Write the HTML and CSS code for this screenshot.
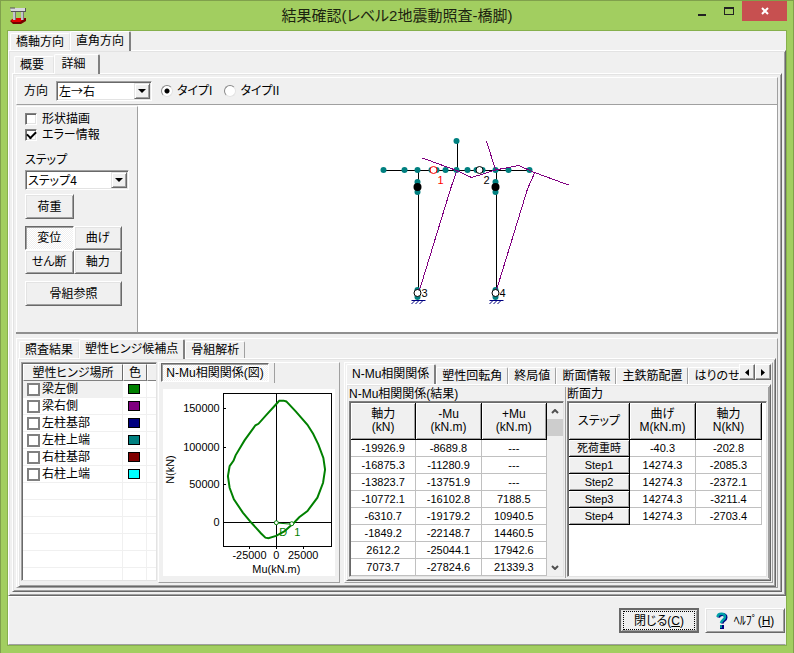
FILE: index.html
```html
<!DOCTYPE html>
<html lang="ja">
<head>
<meta charset="utf-8">
<title>結果確認(レベル2地震動照査-橋脚)</title>
<link rel="stylesheet" href="styles.css">
</head>
<body>
<div class="window">
  <header class="titlebar">
    <svg class="app-icon" width="17" height="17" viewBox="0 0 17 17" aria-hidden="true">
      <path d="M0 14l4-3h12v3l-5 3H3z" fill="#700"/>
      <path d="M1 13l4-2h10l-5 4H2z" fill="#e00000"/>
      <path d="M3 4h3v9H3zM11 4h3v9h-3z" fill="#c4c4cc"/>
      <path d="M5 4h1v9H5zM13 4h1v9h-1z" fill="#777"/>
      <path d="M0 1h15l1 3H1z" fill="#d8d8de"/>
      <path d="M0 1h5M1 4.500h15M15.500 1v4" stroke="#555" fill="none"/>
    </svg>
    <h1 class="title">結果確認(レベル2地震動照査-橋脚)</h1>
    <div class="controls">
      <button class="control" type="button" aria-label="最小化"><svg width="8" height="9"><path d="M0 7h8v2H0z" fill="#222"/></svg></button>
      <button class="control" type="button" aria-label="最大化"><svg width="10" height="9"><path d="M0 0h10v8H0zM1 2v5h8V2z" fill="#222" fill-rule="evenodd"/></svg></button>
      <button class="control close" type="button" aria-label="閉じる"><svg width="8" height="8"><path d="M1 1l6 6M7 1l-6 6" stroke="#fff" stroke-width="2"/></svg></button>
    </div>
  </header>

  <main class="client">
    <nav class="tabs">
      <button class="tab" type="button">橋軸方向</button>
      <button class="tab active" type="button">直角方向</button>
    </nav>
    <section class="page">
      <nav class="tabs">
        <button class="tab short" type="button">概要</button>
        <button class="tab active short" type="button">詳細</button>
      </nav>
      <section class="page">
        <form class="direction raised">
          <label for="dir">方向</label>
          <span class="combo combo-dir"><select id="dir"><option>左→右</option></select><i class="drop"></i></span>
          <label class="radio"><input type="radio" name="type" checked>タイプI</label>
          <label class="radio"><input type="radio" name="type">タイプII</label>
        </form>

        <div class="view">
          <aside class="side">
            <label class="check"><input type="checkbox">形状描画</label>
            <label class="check"><input type="checkbox" checked>エラー情報</label>
            <label class="step-label" for="step">ステップ</label>
            <span class="combo combo-step"><select id="step"><option>ステップ4</option></select><i class="drop"></i></span>
            <button class="btn load" type="button">荷重</button>
            <div class="modes">
              <button class="btn pressed" type="button">変位</button>
              <button class="btn" type="button">曲げ</button>
              <button class="btn" type="button">せん断</button>
              <button class="btn" type="button">軸力</button>
            </div>
            <button class="btn" type="button">骨組参照</button>
          </aside>
          <div class="canvas">
            <svg class="frame" viewBox="139 105 638 227" role="img" aria-label="骨組モデル">
              <g stroke="#000" shape-rendering="crispEdges">
                <path d="M384 170.500H530M457.500 141V170M418.500 170V298M496.500 170V298" fill="none"/>
              </g>
              <g fill="#008080">
                <circle cx="384" cy="170" r="3"/><circle cx="405" cy="170" r="3"/><circle cx="418" cy="170" r="3"/>
                <circle cx="432" cy="170" r="3"/><circle cx="437" cy="170" r="3"/><circle cx="446" cy="170" r="3"/>
                <circle cx="457" cy="170" r="3"/><circle cx="468" cy="170" r="3"/><circle cx="477" cy="170" r="3"/>
                <circle cx="483" cy="170" r="3"/><circle cx="496" cy="170" r="3"/><circle cx="509" cy="170" r="3"/>
                <circle cx="530" cy="170" r="3"/><circle cx="457" cy="141" r="3"/>
                <circle cx="418" cy="182" r="3"/><circle cx="418" cy="192" r="3"/><circle cx="496" cy="182" r="3"/><circle cx="496" cy="192" r="3"/>
                <circle cx="418" cy="290" r="3"/><circle cx="418" cy="297" r="3"/><circle cx="496" cy="290" r="3"/><circle cx="496" cy="297" r="3"/>
              </g>
              <circle cx="418" cy="187" r="4"/><circle cx="496" cy="187" r="4"/>
              <g stroke="#800080" fill="none" shape-rendering="crispEdges">
                <path d="M423 158L457 170.500L472 177.500L485 173.500L496 170L519 165.500L535 172.500L569 185"/>
                <path d="M457 172L452 186L420 290M487 141L496 170M535 173L528 189L497 290"/>
              </g>
              <g fill="#fff" stroke="#000">
                <circle cx="434" cy="170" r="3.500" stroke="#f00"/><circle cx="480" cy="170" r="3.500"/>
                <circle cx="418" cy="293" r="3.500"/><circle cx="496" cy="293" r="3.500"/>
              </g>
              <g stroke="#000080" fill="none">
                <path d="M412 300.500H426M415 301l-3 3M419 301l-3 3M423 301l-3 3M490 300.500H504M493 301l-3 3M497 301l-3 3M501 301l-3 3"/>
              </g>
              <g class="axis">
                <text x="438" y="184" fill="#f00">1</text><text x="484" y="184">2</text>
                <text x="422" y="297">3</text><text x="500" y="297">4</text>
              </g>
            </svg>
          </div>
        </div>

        <div class="results raised">
          <nav class="tabs">
            <button class="tab" type="button">照査結果</button>
            <button class="tab active" type="button">塑性ヒンジ候補点</button>
            <button class="tab" type="button">骨組解析</button>
          </nav>
          <section class="page columns">
            <div class="hinge-list">
              <table class="hinges">
                <colgroup><col><col class="c-color"><col class="c-rest"></colgroup>
                <thead><tr><th>塑性ヒンジ場所</th><th>色</th><th></th></tr></thead>
                <tbody>
                  <tr class="current"><td><label><input type="checkbox">梁左側</label></td><td><i class="swatch green"></i></td><td></td></tr>
                  <tr><td><label><input type="checkbox">梁右側</label></td><td><i class="swatch purple"></i></td><td></td></tr>
                  <tr><td><label><input type="checkbox">左柱基部</label></td><td><i class="swatch navy"></i></td><td></td></tr>
                  <tr><td><label><input type="checkbox">左柱上端</label></td><td><i class="swatch teal"></i></td><td></td></tr>
                  <tr><td><label><input type="checkbox">右柱基部</label></td><td><i class="swatch maroon"></i></td><td></td></tr>
                  <tr><td><label><input type="checkbox">右柱上端</label></td><td><i class="swatch aqua"></i></td><td></td></tr>
                  <tr><td></td><td></td><td></td></tr>
                  <tr><td></td><td></td><td></td></tr>
                  <tr><td></td><td></td><td></td></tr>
                  <tr><td></td><td></td><td></td></tr>
                  <tr><td></td><td></td><td></td></tr>
                  <tr><td></td><td></td><td></td></tr>
                </tbody>
              </table>
            </div>

            <div class="chart-panel">
              <div class="chart-head"><button class="chart-btn" type="button">N-Mu相関関係(図)</button></div>
              <div class="chart-box">
                <svg class="chart" viewBox="0 0 173 188" role="img" aria-label="N-Mu相関関係">
                  <g stroke="#000" fill="none" shape-rendering="crispEdges">
                    <path d="M60.500 4.500h109v154h-109zM114.500 4V158M60 134.500H169M60 19.500h3M60 58.500h3M60 96.500h3M87.500 158v3M114.500 158v3M141.500 158v3"/>
                  </g>
                  <path d="M117 11.700L114.700 14.300L104 26L96 35L93 36.500L82 51.700L73 66.700L71 72L67 77.700L65.300 87.700L67 99.300L71.300 111L80.300 124.300L88.700 134.300L98.700 145.300L103 149.500L106 150L113.700 147.700L122 143.300L132 134.300L137 129L145.300 122.700L155.300 109.300L161 94.300L163 81L161.300 69.300L156.300 56L151 45L145.300 36L133.700 22.700L124 12.500L121.300 11.700Z" fill="none" stroke="#008000" stroke-width="2"/>
                  <path d="M114 134.700L129 136" stroke="#008000"/>
                  <g fill="#fff" stroke="#008000"><circle cx="114" cy="134.500" r="2"/><circle cx="129.500" cy="135.500" r="2"/></g>
                  <g class="axis end"><text x="57" y="23">150000</text><text x="57" y="62">100000</text><text x="57" y="100">50000</text><text x="57" y="138">0</text></g>
                  <g class="axis mid"><text x="87" y="171">-25000</text><text x="114" y="171">0</text><text x="141" y="171">25000</text></g>
                  <g class="axis-title"><text x="114" y="185">Mu(kN.m)</text><text transform="translate(11 81) rotate(-90)">N(kN)</text></g>
                  <g class="axis mark"><text x="117" y="148">D</text><text x="132" y="148">1</text></g>
                </svg>
              </div>
            </div>

            <div class="detail raised">
              <div class="tab-strip">
                <nav class="tabs">
                  <button class="tab active" type="button">N-Mu相関関係</button>
                  <button class="tab" type="button">塑性回転角</button>
                  <button class="tab" type="button">終局値</button>
                  <button class="tab" type="button">断面情報</button>
                  <button class="tab" type="button">主鉄筋配置</button>
                  <button class="tab last" type="button">はりのせ</button>
                </nav>
                <button class="scroll-btn" type="button" aria-label="前へ"><svg width="4" height="7"><path d="M4 0v7L0 3.500z"/></svg></button>
                <button class="scroll-btn" type="button" aria-label="次へ"><svg width="4" height="7"><path d="M0 0v7l4-3.500z"/></svg></button>
              </div>
              <section class="page grids">
                <div class="group">
                  <h2>N-Mu相関関係(結果)</h2>
                  <div class="sunken">
                    <table class="grid">
                      <thead><tr><th>軸力<br>(kN)</th><th>-Mu<br>(kN.m)</th><th>+Mu<br>(kN.m)</th></tr></thead>
                      <tbody>
                        <tr><td>-19926.9</td><td>-8689.8</td><td>---</td></tr>
                        <tr><td>-16875.3</td><td>-11280.9</td><td>---</td></tr>
                        <tr><td>-13823.7</td><td>-13751.9</td><td>---</td></tr>
                        <tr><td>-10772.1</td><td>-16102.8</td><td>7188.5</td></tr>
                        <tr><td>-6310.7</td><td>-19179.2</td><td>10940.5</td></tr>
                        <tr><td>-1849.2</td><td>-22148.7</td><td>14460.5</td></tr>
                        <tr><td>2612.2</td><td>-25044.1</td><td>17942.6</td></tr>
                        <tr><td>7073.7</td><td>-27824.6</td><td>21339.3</td></tr>
                      </tbody>
                    </table>
                    <div class="scrollbar">
                      <svg width="8" height="5"><path d="M1 4l3-3 3 3" fill="none" stroke="#505050" stroke-width="2"/></svg>
                      <i class="thumb"></i>
                      <svg width="8" height="5"><path d="M1 1l3 3 3-3" fill="none" stroke="#505050" stroke-width="2"/></svg>
                    </div>
                  </div>
                </div>
                <div class="group">
                  <h2>断面力</h2>
                  <div class="sunken">
                    <table class="grid forces">
                      <colgroup><col class="c-step"><col><col></colgroup>
                      <thead><tr><th>ステップ</th><th>曲げ<br>M(kN.m)</th><th>軸力<br>N(kN)</th></tr></thead>
                      <tbody>
                        <tr><th>死荷重時</th><td>-40.3</td><td>-202.8</td></tr>
                        <tr><th>Step1</th><td>14274.3</td><td>-2085.3</td></tr>
                        <tr><th>Step2</th><td>14274.3</td><td>-2372.1</td></tr>
                        <tr><th>Step3</th><td>14274.3</td><td>-3211.4</td></tr>
                        <tr><th>Step4</th><td>14274.3</td><td>-2703.4</td></tr>
                      </tbody>
                    </table>
                  </div>
                </div>
              </section>
            </div>
          </section>
        </div>
      </section>
    </section>

    <footer class="footer">
      <button class="btn default" type="button"><span class="focus">閉じる(<u>C</u>)</span></button>
      <button class="btn help" type="button">
        <svg width="12" height="17" viewBox="0 0 12 17" aria-hidden="true">
          <path d="M2.500 5.500C3 1.500 10 1.500 10 5.500C10 8.500 6.500 8 6 11.500" fill="none" stroke="#000080" stroke-width="3"/>
          <path d="M1.500 5C2 .5 9 .5 9 5C9 8 5.500 7.500 5 11" fill="none" stroke="#00a0a8" stroke-width="2.500"/>
          <path d="M4 13h4v4H4z" fill="#000080"/><path d="M4 13h2v3H4z" fill="#008c98"/>
        </svg>
        <span>ﾍﾙﾌﾟ(<u>H</u>)</span>
      </button>
    </footer>
  </main>
</div>
</body>
</html>
```
FILE: styles.css
```css
* { box-sizing: border-box; }

body {
  margin: 0;
  font: 12px/14px "Liberation Sans", "Noto Sans CJK JP", sans-serif;
  font-feature-settings: "palt";
  color: #000;
}

button, select, input {
  margin: 0;
  padding: 0;
  font: inherit;
  font-feature-settings: inherit;
  color: inherit;
}

button { white-space: nowrap; }
svg { display: block; }

/* Window frame */
.window {
  display: flex;
  flex-direction: column;
  min-height: 100vh;
  padding: 0 6px 7px;
  background: #a2ce60;
  border: 1px solid #80a04c;
}

.titlebar {
  display: grid;
  grid-template-columns: 1fr auto 1fr;
  height: 29px;
}

.app-icon { margin: 6px 0 0 3px; }

.title {
  margin: 0;
  padding-top: 3px;
  font-size: 15px;
  font-weight: 400;
  line-height: 24px;
  color: #1c2410;
}

.controls {
  display: flex;
  justify-content: flex-end;
}

.control {
  display: flex;
  justify-content: center;
  width: 27px;
  height: 20px;
  padding-top: 6px;
  background: none;
  border: 0;
}

.control.close {
  width: 45px;
  background: #c75050;
}

.client {
  flex: 1;
  display: flex;
  flex-direction: column;
  background: #f0f0f0;
  border: 1px solid #86b04c;
}

/* Tabs and their pages */
.tabs {
  display: flex;
  align-items: flex-end;
  min-width: 0;
  height: 19px;
  padding-left: 2px;
}

.tab {
  flex: none;
  height: 17px;
  padding: 0 5px;
  background: #f0f0f0;
  border: solid;
  border-width: 1px 1px 0;
  border-color: #fff #a0a0a0 #fff #fff;
  border-radius: 2px 2px 0 0;
}

.tab:has(+ .active) { border-right-color: #e3e3e3; }

.tab.active {
  position: relative;
  z-index: 1;
  height: 20px;
  margin-bottom: -1px;
  padding: 0 5px 2px;
  border-right: 2px solid #808080;
}

.tab.short { min-width: 40px; padding: 0 9px 0 5px; }
.tab.active.short { min-width: 46px; padding: 0 12px 2px 6px; }

.page {
  flex: 1;
  display: flex;
  flex-direction: column;
  min-width: 0;
  padding: 3px;
  border: 1px solid;
  border-color: #fff #696969 #696969 #fff;
  box-shadow: inset 1px 1px #e3e3e3, inset -1px -1px #a0a0a0;
}

.raised {
  border: 1px solid;
  border-color: #fff #a0a0a0 #a0a0a0 #fff;
}

/* Direction bar */
.direction {
  display: flex;
  align-items: center;
  height: 28px;
  padding-left: 7px;
}

.combo {
  position: relative;
  display: block;
  height: 20px;
}

.combo-dir {
  width: 96px;
  margin: 0 9px 0 8px;
}

.combo select {
  width: 100%;
  height: 100%;
  padding: 0 18px 0 2px;
  appearance: none;
  font-family: "Noto Sans CJK JP", sans-serif;
  background: #fff;
  border: 1px solid;
  border-color: #a0a0a0 #fff #fff #a0a0a0;
  border-radius: 0;
  box-shadow: inset 1px 1px #696969, inset -1px -1px #e3e3e3;
}

.drop {
  position: absolute;
  top: 2px;
  right: 2px;
  bottom: 2px;
  display: grid;
  place-items: center;
  width: 16px;
  background: #f0f0f0;
  border: 1px solid;
  border-color: #e3e3e3 #696969 #696969 #e3e3e3;
  box-shadow: inset 1px 1px #fff, inset -1px -1px #a0a0a0;
  pointer-events: none;
}

.drop::after {
  content: "";
  border: solid transparent;
  border-width: 4px 4px 0;
  border-top-color: #000;
}

.radio {
  display: flex;
  align-items: center;
  gap: 4px;
  margin-right: 12px;
}

.radio input {
  width: 12px;
  height: 12px;
  appearance: none;
  background: #fff;
  border: 1px solid;
  border-color: #888 #e3e3e3 #e3e3e3 #888;
  border-radius: 50%;
}

.radio input:checked { background: radial-gradient(circle, #000 0 2px, #fff 3px); }

/* Model view */
.view {
  display: flex;
  height: 229px;
  border-bottom: 2px solid #909090;
}

.side {
  display: flex;
  flex-direction: column;
  flex: none;
  width: 122px;
  margin-top: 1px;
  padding: 4px 15px 0 8px;
  border: solid;
  border-width: 1px 1px 0;
  border-color: #fff #a0a0a0 #fff #fff;
}

.check {
  display: flex;
  align-items: center;
  gap: 5px;
  height: 16px;
}

.check input {
  display: grid;
  width: 12px;
  height: 12px;
  appearance: none;
  background: #fff;
  border: 1px solid;
  border-color: #808080 #fff #fff #808080;
  box-shadow: inset 1px 1px #696969, inset -1px -1px #e3e3e3;
}

.check input:checked::after {
  content: "";
  place-self: center;
  width: 7px;
  height: 4px;
  margin-bottom: 2px;
  border: solid #000;
  border-width: 0 0 2px 2px;
  rotate: -45deg;
}

.step-label { margin: 10px 0 3px; }
.combo-step { width: 104px; }

.btn {
  height: 25px;
  background: #f0f0f0;
  border: 1px solid;
  border-color: #fff #696969 #696969 #fff;
  box-shadow: inset 1px 1px #e3e3e3, inset -1px -1px #a0a0a0;
}

.load {
  width: 49px;
  margin-top: 4px;
}

.modes {
  display: grid;
  grid-template-columns: 1fr 1fr;
  margin: 7px 0;
}

.modes .btn { height: 24px; }

.side > .btn,
.modes { flex: none; }

.btn.pressed {
  background: repeating-conic-gradient(#fff 0 25%, #f0f0f0 0 50%) 0 0 / 2px 2px;
  border-color: #696969 #fff #fff #696969;
  box-shadow: inset 1px 1px #a0a0a0;
}

.canvas {
  flex: 1;
  background: #fff;
  border-right: 1px solid #a0a0a0;
}

.frame {
  width: 100%;
  height: 100%;
}

/* Results */
.results {
  flex: 1;
  display: flex;
  flex-direction: column;
  margin-top: 4px;
  padding: 0 1px;
}

.results > .tabs { padding-left: 1px; }

.columns {
  display: grid;
  grid-template-columns: 136px 183px minmax(0, 1fr);
  padding: 3px 2px;
}

.hinge-list {
  height: 219px;
  overflow: hidden;
  background: #fff;
  border: 1px solid;
  border-color: #a0a0a0 #e3e3e3 #e3e3e3 #a0a0a0;
  box-shadow: inset 1px 1px #696969;
  padding: 1px 0 0 1px;
}

.hinges {
  width: 100%;
  table-layout: fixed;
  border-collapse: separate;
  border-spacing: 0;
}

.c-color { width: 24px; }
.c-rest { width: 9px; }

.hinges th {
  height: 17px;
  padding: 0;
  font-weight: 400;
  background: #f0f0f0;
  border: 1px solid;
  border-color: #fff #696969 #808080 #fff;
}

.hinges td {
  height: 17px;
  padding: 0 0 0 4px;
  border: solid #f0f0f0;
  border-width: 0 1px 1px 0;
}

.hinges td:last-child,
.hinges th:last-child { border-right: 0; }

.hinges .current td:first-child { background: #f0f0f0; }

.hinges label {
  display: flex;
  align-items: center;
  gap: 2px;
  height: 16px;
}

.hinges input {
  width: 13px;
  height: 13px;
  appearance: none;
  background: #fff;
  border: 2px solid #808080;
}

.swatch {
  display: block;
  width: 12px;
  height: 10px;
  margin-left: 1px;
  border: 1px solid #000;
}

.green { background: #008000; }
.purple { background: #800080; }
.navy { background: #000080; }
.teal { background: #008080; }
.maroon { background: #800000; }
.aqua { background: #00ffff; }

.chart-panel {
  display: flex;
  flex-direction: column;
  margin-left: 1px;
  border: 1px solid;
  border-color: #fff #a0a0a0 #a0a0a0 #fff;
}

.chart-head {
  width: 116px;
  height: 20px;
  padding-left: 2px;
  border-right: 1px solid #a0a0a0;
}

.chart-btn {
  width: 108px;
  height: 19px;
  background: repeating-conic-gradient(#fff 0 25%, #f0f0f0 0 50%) 0 0 / 2px 2px;
  border: 1px solid;
  border-color: #696969 #fff #fff #696969;
  box-shadow: inset 1px 1px #a0a0a0;
}

.chart-box {
  margin: 6px 4px 0;
  background: #fff;
}

.chart { width: 100%; }

.axis { font-size: 11px; }
.axis.end { text-anchor: end; }
.axis.mid { text-anchor: middle; }
.axis.mark { fill: #008000; }

.axis-title {
  font-size: 11px;
  text-anchor: middle;
}

/* Detail tables */
.detail {
  display: flex;
  flex-direction: column;
  margin-left: 4px;
  padding: 1px;
}

.tab-strip {
  display: flex;
  height: 20px;
}

.tab-strip .tabs {
  flex: 1;
  height: 20px;
  padding-left: 0;
  overflow: hidden;
}

.tab-strip .tab.active { margin-bottom: 0; }

.tab-strip .last {
  padding-right: 0;
  border-right: 0;
}

.scroll-btn {
  display: grid;
  place-items: center;
  flex: none;
  width: 16px;
  height: 16px;
  background: #f0f0f0;
  border: 1px solid;
  border-color: #fff #696969 #696969 #fff;
  box-shadow: inset -1px -1px #a0a0a0;
}

.grids {
  display: grid;
  grid-template-columns: 218fr 203fr;
  padding: 2px 1px;
}

.group {
  display: flex;
  flex-direction: column;
  min-width: 0;
  padding: 0 1px 1px;
  border-right: 1px solid #a0a0a0;
}

.group h2 {
  margin: 0;
  font-size: 12px;
  font-weight: 400;
  line-height: 14px;
}

.sunken {
  flex: 1;
  display: flex;
  align-items: flex-start;
  background: #fff;
  border: 1px solid;
  border-color: #808080 #e3e3e3 #e3e3e3 #808080;
  box-shadow: inset 1px 1px #696969;
  padding: 1px 0 0 1px;
}

.grid {
  flex: 1;
  width: 100%;
  min-width: 0;
  table-layout: fixed;
  border-collapse: separate;
  border-spacing: 0;
  text-align: center;
}

.grid.forces { margin-right: 4px; }
.c-step { width: 61px; }

.grid th {
  height: 17px;
  padding: 0;
  font-weight: 400;
  line-height: 13px;
  background: #f0f0f0;
  border: solid #000;
  border-width: 0 1px 1px 0;
  box-shadow: inset 1px 1px #fff, inset -1px -1px #a0a0a0;
}

.grid thead th { height: 37px; }
.grid tbody th { font-size: 11px; }

.grid td {
  height: 17px;
  padding: 0;
  font-size: 11px;
  border: solid #c0c0c0;
  border-width: 0 1px 1px 0;
}

.scrollbar {
  display: flex;
  flex-direction: column;
  flex: none;
  align-items: center;
  align-self: stretch;
  width: 16px;
  padding: 6px 0;
  background: #f0f0f0;
}

.thumb {
  width: 100%;
  height: 17px;
  margin: 5px 0 auto;
  background: #cdcdcd;
}

/* Footer */
.footer {
  display: flex;
  gap: 6px;
  justify-content: flex-end;
  height: 49px;
  padding: 11px 0 0;
  border: 1px solid;
  border-color: #fff #f0f0f0 #a0a0a0 #fff;
}

.footer .btn { width: 80px; }

.btn.default {
  padding: 1px 2px;
  border: 2px solid #696969;
}

.focus {
  display: grid;
  grid-auto-flow: column;
  place-content: center;
  height: 100%;
  border: 1px dotted #000;
}

.help {
  display: flex;
  align-items: center;
  justify-content: center;
  gap: 6px;
}
```
